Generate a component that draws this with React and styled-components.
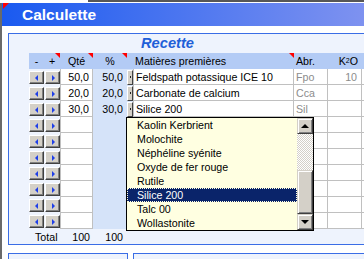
import React from "react";
import styled, { createGlobalStyle } from "styled-components";

const GlobalStyle = createGlobalStyle`
  body {
    margin: 0;
    background: #fff;
    font-family: "Liberation Sans", Arial, sans-serif;
  }
`;

const Window = styled.div`
  width: 364px;
  height: 259px;
  overflow: hidden;
  display: flex;
  flex-direction: column;
`;

const TopEdge = styled.div`
  height: 3px;
  flex: none;
  display: flex;
  &::after {
    content: "";
    margin-left: 88px;
    flex: 1;
    height: 2px;
    background: #575757;
  }
`;

const Body = styled.div`
  flex: 1;
  border-left: 2px solid #6a6a6a;
  display: flex;
  flex-direction: column;
`;

const TitleBar = styled.div`
  position: relative;
  height: 23px;
  flex: none;
  padding-left: 20px;
  display: flex;
  align-items: center;
  background: linear-gradient(90deg, #1a5af0, #7e92f0);
  color: #fff;
  font-weight: bold;
  font-size: 15.5px;
`;

const CornerFlag = styled.span`
  position: absolute;
  top: 0;
  left: 1px;
  border-top: 6px solid #f00;
  border-right: 6px solid transparent;
`;

const Panel = styled.div`
  position: relative;
  flex: none;
  width: 420px;
  height: 212px;
  margin: 7px 0 0 6px;
  box-sizing: border-box;
  border: 1px solid #3a6de6;
  background: #eef3fd;
  padding-left: 20px;
`;

const Heading = styled.div`
  height: 19px;
  padding-left: 112px;
  line-height: 19px;
  font-size: 11pt;
  font-weight: bold;
  font-style: italic;
  color: #1f5fd8;
`;

const Row = styled.div`
  display: grid;
  grid-template-columns: 15px 16px 33px 34px 6px 161px 34px 34px 1fr;
  height: ${(p) => p.$h || 16}px;
  font-size: 8pt;
  color: #000;
`;

const HeaderRow = styled(Row)`
  background: #b3cbf5;
`;

const HeadCell = styled.div`
  position: relative;
  display: flex;
  align-items: center;
  justify-content: ${(p) => p.$align || "center"};
  padding: 0 ${(p) => p.$pr || 0}px 0 ${(p) => p.$pl || 0}px;
  white-space: nowrap;
  &::after {
    content: "";
    display: ${(p) => (p.$flag ? "block" : "none")};
    position: absolute;
    top: 0;
    right: 0;
    border-top: 5px solid #f00;
    border-left: 5px solid transparent;
  }
`;

const Sub = styled.sub`
  font-size: 7px;
  vertical-align: -2px;
  line-height: 0;
`;

const Cell = styled.div`
  box-sizing: border-box;
  display: flex;
  align-items: center;
  justify-content: ${(p) => p.$align || "flex-start"};
  padding: 0 ${(p) => p.$pr || 0}px 0 ${(p) => p.$pl || 0}px;
  white-space: nowrap;
  overflow: hidden;
  background: ${(p) => p.$bg || "transparent"};
  color: ${(p) => (p.$muted ? "#8c8c8c" : "#000")};
  border-bottom: ${(p) => (p.$grid ? "1px solid #c0c0c0" : "none")};
  border-right: ${(p) => (p.$grid ? "1px solid #c0c0c0" : "none")};
  border-left: ${(p) => (p.$lead ? "1px solid #c0c0c0" : "none")};
  grid-column: ${(p) => p.$span || "auto"};
`;

const BtnCell = styled.div`
  padding: 2px 0 0 ${(p) => p.$offset || 0}px;
`;

const SpinButton = styled.div`
  width: 15px;
  height: 13px;
  box-sizing: border-box;
  background: #d4d0c8;
  border: 1px solid;
  border-color: #fff #404040 #404040 #fff;
  box-shadow: inset -1px -1px #808080;
  display: flex;
  align-items: center;
  justify-content: center;
  &::before {
    content: "";
    border-top: 3px solid transparent;
    border-bottom: 3px solid transparent;
    ${(p) =>
      p.$dir === "left"
        ? "border-right: 3px solid #1f3fe8; margin-right: 1px;"
        : "border-left: 3px solid #1f3fe8; margin-left: 1px;"}
  }
`;

const TinyButton = styled.div`
  width: 6px;
  height: 15px;
  box-sizing: border-box;
  background: #d4d0c8;
  border: 1px solid;
  border-color: #fff #404040 #404040 #fff;
  display: flex;
  align-items: center;
  justify-content: center;
  &::after {
    content: "";
    width: 1px;
    height: 2px;
    background: #222;
  }
`;

const DropList = styled.div`
  position: absolute;
  left: 117px;
  top: 83px;
  width: 188px;
  height: 114px;
  box-sizing: border-box;
  border: 1px solid #000;
  background: #ffffe1;
  display: flex;
`;

const Items = styled.div`
  flex: 1;
  display: flex;
  flex-direction: column;
`;

const Item = styled.div`
  height: 14px;
  line-height: 14px;
  padding-left: 10px;
  font-size: 8pt;
  color: ${(p) => (p.$selected ? "#fff" : "#000")};
  background: ${(p) => (p.$selected ? "#0a246a" : "transparent")};
  outline: ${(p) => (p.$selected ? "1px dotted #ffffe1" : "none")};
  outline-offset: -1px;
`;

const ScrollBar = styled.div`
  width: 16px;
  display: flex;
  flex-direction: column;
`;

const ScrollArrow = styled.div`
  height: 16px;
  flex: none;
  box-sizing: border-box;
  background: #d4d0c8;
  border: 1px solid;
  border-color: #d4d0c8 #404040 #404040 #d4d0c8;
  box-shadow: inset 1px 1px #fff, inset -1px -1px #808080;
  display: flex;
  align-items: center;
  justify-content: center;
  &::before {
    content: "";
    border-left: 4px solid transparent;
    border-right: 4px solid transparent;
    ${(p) =>
      p.$dir === "up"
        ? "border-bottom: 4px solid #000;"
        : "border-top: 4px solid #000;"}
  }
`;

const Track = styled.div`
  flex: 0 0 ${(p) => p.$h}px;
  background: repeating-conic-gradient(#d4d0c8 0 25%, #fff 0 50%) 0 0 / 2px 2px;
`;

const Thumb = styled.div`
  flex: 0 0 ${(p) => p.$h}px;
  box-sizing: border-box;
  background: #d4d0c8;
  border: 1px solid;
  border-color: #d4d0c8 #404040 #404040 #d4d0c8;
  box-shadow: inset 1px 1px #fff, inset -1px -1px #808080;
`;

const BottomRow = styled.div`
  display: flex;
  gap: 5px;
  margin: 8px 0 0 6px;
  flex: none;
`;

const SubPanel = styled.div`
  flex: none;
  width: ${(p) => p.$w}px;
  height: 30px;
  box-sizing: border-box;
  border: 1px solid #3a6de6;
  background: #eef3fd;
`;

const recipe = [
  { q: "50,0", p: "50,0", name: "Feldspath potassique ICE 10", abr: "Fpo", k: "10" },
  { q: "20,0", p: "20,0", name: "Carbonate de calcium", abr: "Cca", k: "" },
  { q: "30,0", p: "30,0", name: "Silice 200", abr: "Sil", k: "" },
];

const rows = [...recipe, ...Array.from({ length: 7 }, () => null)];

const materials = [
  "Kaolin Kerbrient",
  "Molochite",
  "Néphéline syénite",
  "Oxyde de fer rouge",
  "Rutile",
  "Silice 200",
  "Talc 00",
  "Wollastonite",
];

const PCT_BG = "#d5e3f9";

export default function App() {
  return (
    <>
      <GlobalStyle />
      <Window>
        <TopEdge />
        <Body>
          <TitleBar>
            <CornerFlag />
            Calculette
          </TitleBar>
          <Panel>
            <Heading>Recette</Heading>
            <HeaderRow>
              <HeadCell>-</HeadCell>
              <HeadCell $flag>+</HeadCell>
              <HeadCell $flag>Qté</HeadCell>
              <HeadCell $flag>%</HeadCell>
              <HeadCell />
              <HeadCell $flag $align="flex-start" $pl={2}>
                Matières premières
              </HeadCell>
              <HeadCell $align="flex-start" $pl={2}>
                Abr.
              </HeadCell>
              <HeadCell $align="flex-end" $pr={4}>
                K<Sub>2</Sub>O
              </HeadCell>
              <HeadCell />
            </HeaderRow>
            {rows.map((r, i) => (
              <Row key={i}>
                <BtnCell>
                  <SpinButton $dir="left" />
                </BtnCell>
                <BtnCell $offset={1}>
                  <SpinButton $dir="right" />
                </BtnCell>
                <Cell $bg="#fff" $grid $lead $align="flex-end" $pr={3}>
                  {r ? r.q : ""}
                </Cell>
                <Cell $bg={PCT_BG} $align="flex-end" $pr={4}>
                  {r ? r.p : ""}
                </Cell>
                <Cell $bg={PCT_BG}>{r && <TinyButton />}</Cell>
                <Cell $bg="#fff" $grid $lead $pl={2}>
                  {r ? r.name : ""}
                </Cell>
                <Cell $bg="#fff" $grid $muted $pl={2}>
                  {r ? r.abr : ""}
                </Cell>
                <Cell $bg="#fff" $grid $muted $align="flex-end" $pr={4}>
                  {r ? r.k : ""}
                </Cell>
                <Cell $bg="#fff" $grid />
              </Row>
            ))}
            <Row $h={15}>
              <Cell $span="span 2" $pl={6}>
                Total
              </Cell>
              <Cell $align="flex-end" $pr={3}>
                100
              </Cell>
              <Cell $align="flex-end" $pr={4}>
                100
              </Cell>
            </Row>
            <DropList>
              <Items>
                {materials.map((m) => (
                  <Item key={m} $selected={m === "Silice 200"}>
                    {m}
                  </Item>
                ))}
              </Items>
              <ScrollBar>
                <ScrollArrow $dir="up" />
                <Track $h={36} />
                <Thumb $h={44} />
                <ScrollArrow $dir="down" />
              </ScrollBar>
            </DropList>
          </Panel>
          <BottomRow>
            <SubPanel $w={120} />
            <SubPanel $w={300} />
          </BottomRow>
        </Body>
      </Window>
    </>
  );
}
